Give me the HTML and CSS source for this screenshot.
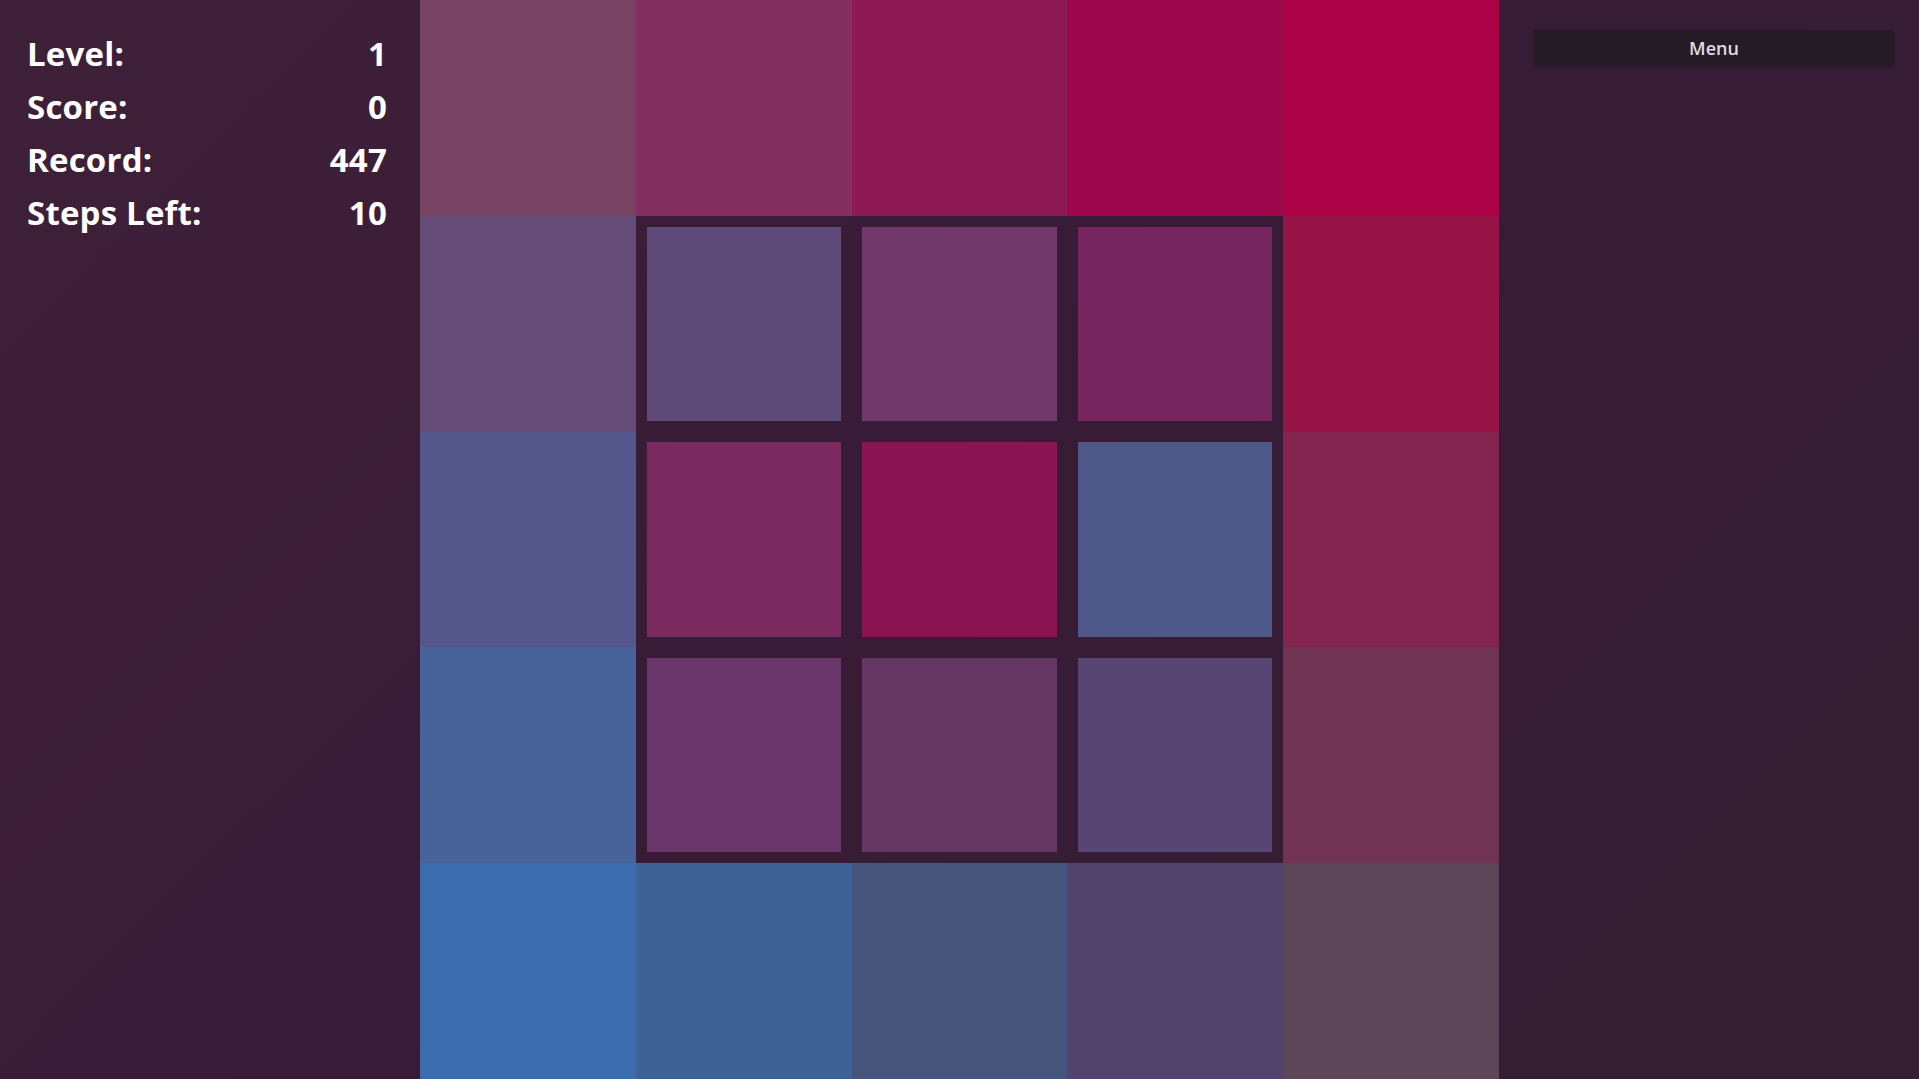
FILE: index.html
```html
<!DOCTYPE html>
<html lang="en">
<head>
<meta charset="utf-8">
<title>Colors</title>
<link rel="stylesheet" href="styles.css">
</head>
<body>
<div class="app">
  <aside class="stats">
    <div class="stat"><span>Level:</span><span>1</span></div>
    <div class="stat"><span>Score:</span><span>0</span></div>
    <div class="stat"><span>Record:</span><span>447</span></div>
    <div class="stat"><span>Steps Left:</span><span>10</span></div>
  </aside>
  <main class="board">
    <div class="cell c00"></div><div class="cell c01"></div><div class="cell c02"></div><div class="cell c03"></div><div class="cell c04"></div>
    <div class="cell c10"></div><div class="cell inner"><div class="tile c11"></div></div><div class="cell inner"><div class="tile c12"></div></div><div class="cell inner"><div class="tile c13"></div></div><div class="cell c14"></div>
    <div class="cell c20"></div><div class="cell inner"><div class="tile c21"></div></div><div class="cell inner"><div class="tile c22"></div></div><div class="cell inner"><div class="tile c23"></div></div><div class="cell c24"></div>
    <div class="cell c30"></div><div class="cell inner"><div class="tile c31"></div></div><div class="cell inner"><div class="tile c32"></div></div><div class="cell inner"><div class="tile c33"></div></div><div class="cell c34"></div>
    <div class="cell c40"></div><div class="cell c41"></div><div class="cell c42"></div><div class="cell c43"></div><div class="cell c44"></div>
  </main>
  <aside class="side">
    <button class="menu-btn">Menu</button>
  </aside>
</div>
</body>
</html>
```
FILE: styles.css
```css
html, body {
  margin: 0;
  padding: 0;
  height: 100%;
  overflow: hidden;
}
body {
  background: linear-gradient(135deg, #3f2039 0%, #381b36 45%, #331f31 100%);
  font-family: "Open Sans", Lato, sans-serif;
  color: #ffffff;
}
.app {
  display: grid;
  grid-template-columns: minmax(0, 1fr) auto minmax(0, 1fr);
  height: 100vh;
}
.stats {
  padding: 27px 33px 0 27px;
  display: flex;
  flex-direction: column;
}
.stat {
  display: flex;
  justify-content: space-between;
  font-size: 33px;
  font-weight: 700;
  line-height: 53px;
  letter-spacing: 0.2px;
}
.board {
  height: 100vh;
  aspect-ratio: 1 / 1;
  display: grid;
  grid-template-columns: repeat(5, 1fr);
  grid-template-rows: repeat(5, 1fr);
}
.cell {
  min-width: 0;
  min-height: 0;
}
.inner {
  display: flex;
  align-items: center;
  justify-content: center;
}
.tile {
  width: 90%;
  height: 90%;
}
.side {
  padding: 30px 25px 0 35px;
}
.menu-btn {
  display: block;
  width: 100%;
  height: 36px;
  border: none;
  border-radius: 3px;
  background: #251b27;
  color: #e2dae1;
  font-family: "Open Sans", Lato, sans-serif;
  font-size: 18px;
  font-weight: 600;
  box-shadow: 0 1px 3px rgba(0,0,0,0.25);
}
.c00 { background: #784263; }
.c01 { background: #832f60; }
.c02 { background: #8e1a54; }
.c03 { background: #9e064c; }
.c04 { background: #aa0244; }
.c10 { background: #654c76; }
.c11 { background: #5e4a78; }
.c12 { background: #71396b; }
.c13 { background: #77255e; }
.c14 { background: #961446; }
.c20 { background: #55578a; }
.c21 { background: #7b2a60; }
.c22 { background: #8a1552; }
.c23 { background: #4d5888; }
.c24 { background: #83234f; }
.c30 { background: #48629a; }
.c31 { background: #69376a; }
.c32 { background: #643862; }
.c33 { background: #574673; }
.c34 { background: #703353; }
.c40 { background: #3b6cae; }
.c41 { background: #3e6294; }
.c42 { background: #46547b; }
.c43 { background: #51446c; }
.c44 { background: #5e4659; }
```
